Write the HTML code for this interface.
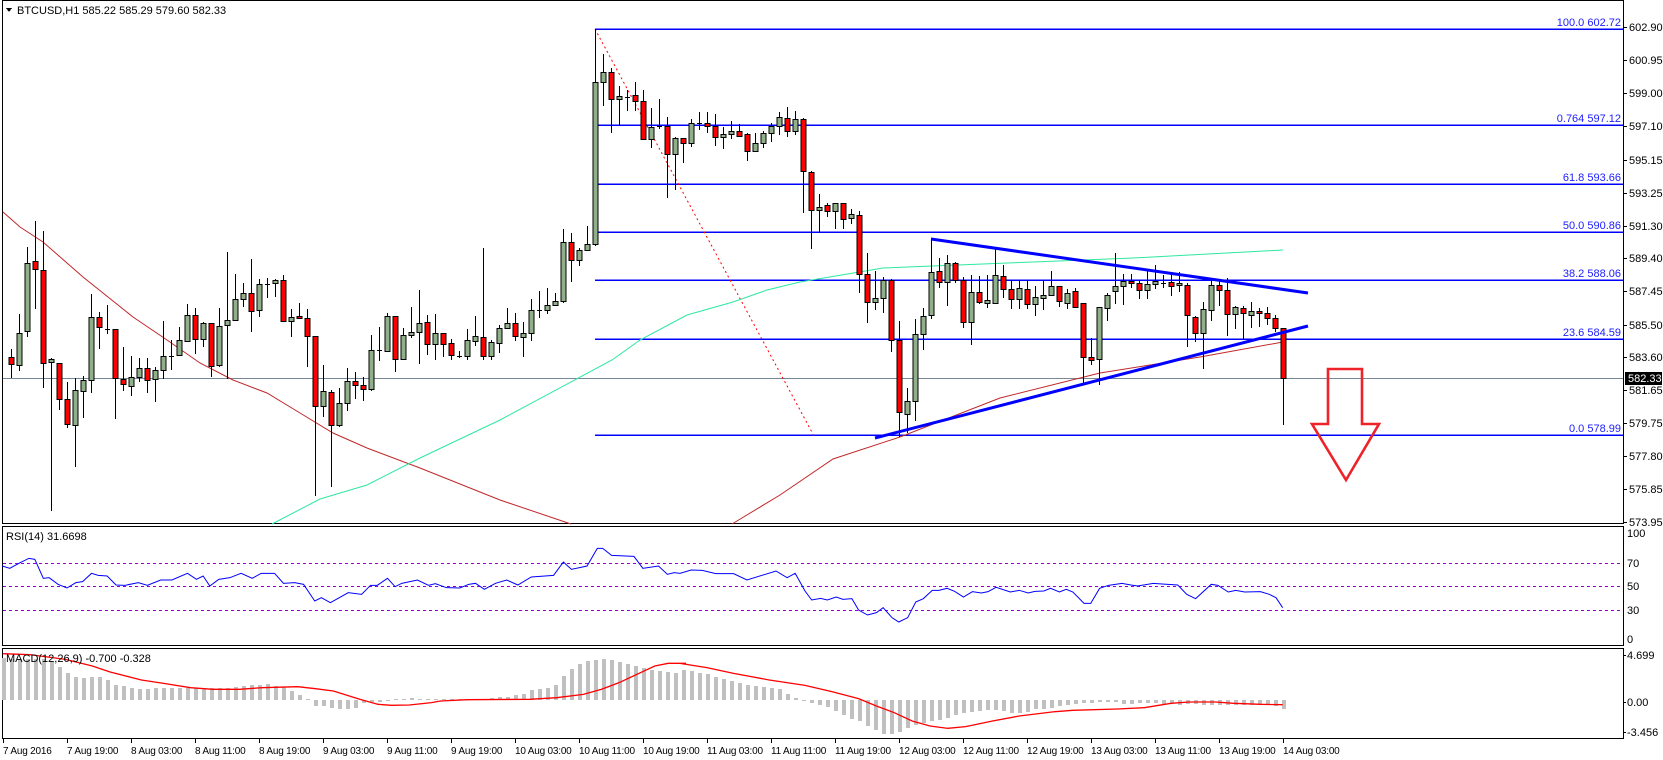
<!DOCTYPE html>
<html><head><meta charset="utf-8">
<style>
html,body{margin:0;padding:0;background:#fff;}
svg{display:block;}
text{font-family:"Liberation Sans",sans-serif;font-size:11px;fill:#000;}
#times text{font-size:10px;letter-spacing:-0.2px;}
</style></head>
<body>
<svg id="s" width="1663" height="760" viewBox="0 0 1663 760" xmlns="http://www.w3.org/2000/svg" shape-rendering="crispEdges">
<rect x="0" y="0" width="1663" height="760" fill="#fff"/>
<rect x="2.5" y="0.5" width="1621" height="523" fill="none" stroke="#000"/>
<rect x="2.5" y="526.5" width="1621" height="119" fill="none" stroke="#000"/>
<rect x="2.5" y="648.5" width="1621" height="90" fill="none" stroke="#000"/>
<g id="grid"></g>
<g stroke="#0000ff" stroke-width="1.5">
<line x1="595" y1="29" x2="1623" y2="29"/>
<line x1="595" y1="125" x2="1623" y2="125"/>
<line x1="595" y1="184" x2="1623" y2="184"/>
<line x1="595" y1="232" x2="1623" y2="232"/>
<line x1="595" y1="280" x2="1623" y2="280"/>
<line x1="595" y1="339" x2="1623" y2="339"/>
<line x1="595" y1="435" x2="1623" y2="435"/>
</g>
<g text-anchor="end" style="font-size:10.5px">
<text x="1621" y="26" style="fill:#2020ff">100.0  602.72</text>
<text x="1621" y="122" style="fill:#2020ff">0.764  597.12</text>
<text x="1621" y="181" style="fill:#2020ff">61.8  593.66</text>
<text x="1621" y="229" style="fill:#2020ff">50.0 590.86</text>
<text x="1621" y="277" style="fill:#2020ff">38.2  588.06</text>
<text x="1621" y="336" style="fill:#2020ff">23.6  584.59</text>
<text x="1621" y="432" style="fill:#2020ff">0.0  578.99</text>
</g>
<line x1="3" y1="378.5" x2="1623" y2="378.5" stroke="#778899"/>
<line x1="595" y1="29" x2="814" y2="436" stroke="#ff0000" stroke-dasharray="2,3" shape-rendering="auto"/>
<g id="ma" shape-rendering="auto"></g>
<g id="candles"></g>
<g stroke="#0000ff" stroke-width="3" shape-rendering="auto">
<line x1="931" y1="239" x2="1308" y2="293"/>
<line x1="875" y1="438" x2="1308" y2="326"/>
</g>
<path d="M1328 369 L1362 369 L1362 424 L1379 424 L1346 480 L1312 424 L1328 424 Z" fill="none" stroke="#ee2229" stroke-width="2.6" shape-rendering="auto"/>
<g id="rsi" shape-rendering="auto"></g>
<g id="macd"></g>
<path d="M6 8 L12 8 L9 12 Z" fill="#000"/>
<text x="17" y="14">BTCUSD,H1  585.22 585.29 579.60 582.33</text>
<text x="6" y="540">RSI(14) 31.6698</text>
<text x="6" y="662">MACD(12,26,9) -0.700 -0.328</text>
<g id="axis"></g>
<rect x="1625" y="372" width="37" height="13" fill="#000"/>
<text x="1628" y="382" style="fill:#fff">582.33</text>
<g id="times"></g>
</svg>
<script>
var NS="http://www.w3.org/2000/svg";
function el(p,t,a,txt){var e=document.createElementNS(NS,t);for(var k in a)e.setAttribute(k,a[k]);if(txt!=null)e.textContent=txt;document.getElementById(p).appendChild(e);return e;}
var pl=["602.90","600.95","599.00","597.10","595.15","593.25","591.30","589.40","587.45","585.50","583.60","581.65","579.75","577.80","575.85","573.95"];
var py=[27,60,93,126,160,193,226,258,291,325,357,390,423,456,489,522];
for(var i=0;i<pl.length;i++){el("axis","line",{x1:1623,y1:py[i]+.5,x2:1627,y2:py[i]+.5,stroke:"#000"});el("axis","text",{x:1629,y:py[i]+4},pl[i]);}
var rl=[["100",533],["70",563],["50",586],["30",610],["0",639]];
rl.forEach(function(r){el("axis","text",{x:1627,y:r[1]+4},r[0]);});
[["4.699",655],["0.00",702],["-3.456",732]].forEach(function(r){el("axis","text",{x:1627,y:r[1]+4},r[0]);el("axis","line",{x1:1623,y1:r[1]+.5,x2:1626,y2:r[1]+.5,stroke:"#000"});});
[563,586,610].forEach(function(y){el("grid","line",{x1:3,y1:y+.5,x2:1623,y2:y+.5,stroke:"#9400d3","stroke-dasharray":"3,3"});});
var tl=["7 Aug 2016","7 Aug 19:00","8 Aug 03:00","8 Aug 11:00","8 Aug 19:00","9 Aug 03:00","9 Aug 11:00","9 Aug 19:00","10 Aug 03:00","10 Aug 11:00","10 Aug 19:00","11 Aug 03:00","11 Aug 11:00","11 Aug 19:00","12 Aug 03:00","12 Aug 11:00","12 Aug 19:00","13 Aug 03:00","13 Aug 11:00","13 Aug 19:00","14 Aug 03:00"];
for(var i=0;i<tl.length;i++){var x=3+64*i;el("times","line",{x1:x+.5,y1:739,x2:x+.5,y2:743,stroke:"#000"});el("times","text",{x:x,y:754},tl[i]);}
var A=[[508,390,610,526],[530,508,595,552],[556,402,572,458],[452,202,470,250],[244,123,386,268],[270,153,623,548],[547,535,992,538],[548,548,690,658],[658,605,743,733],[736,595,860,631],[632,588,713,601],[601,342,640,412],[412,395,506,442],[448,375,463,449],[448,448,718,595],[598,500,633,613],[617,528,647,592],[592,535,607,565],[565,535,638,600],[598,560,665,571],[571,423,596,529],[527,480,569,528],[526,441,527,481],[482,372,486,406],[406,383,523,478],[478,425,502,430],[430,430,592,558],[556,383,560,438],[436,215,598,421],[421,282,421,358],[358,308,380,340],[340,237,457,393],[391,297,412,313],[312,293,355,312],[310,296,352,301],[301,285,424,424],[424,387,472,410],[408,369,414,414],[415,386,560,469],[469,469,948,679],[679,555,712,634],[637,630,922,736],[736,624,742,670],[670,564,692,604],[604,576,658,616],[616,591,664,628],[628,464,634,511],[510,440,542,510],[512,399,516,409],[409,409,575,538],[538,444,540,466],[466,380,473,455],[455,330,553,428]];
var B=[[907,885,1005,973],[973,882,1020,940],[940,940,1010,973],[970,957,1020,1005],[1007,993,1015,1007],[1008,927,1020,961],[964,888,977,949],[952,684,1020,1008],[1008,960,1020,967],[970,915,998,925],[925,864,928,910],[910,880,962,949],[952,906,1012,940],[940,838,962,871],[871,813,893,871],[871,803,883,856],[856,820,858,844],[842,627,848,667],[667,639,785,721],[721,683,737,691],[691,617,692,673],[673,28,677,187],[187,101,258,157],[155,145,338,238],[238,198,315,229],[232,210,272,232],[226,186,272,244],[244,210,358,358],[358,264,385,322],[322,237,326,318],[317,291,533,403],[403,351,509,355],[355,355,428,370],[370,297,382,310],[310,276,330,310],[310,276,340,319],[319,282,377,352],[352,321,388,343],[343,303,358,334],[334,313,350,347],[343,340,424,394],[394,340,394,370],[370,334,385,340],[340,309,367,318],[318,276,346,292],[295,261,352,334],[334,273,346,298],[298,295,580,454],[457,454,688,571],[571,522,640,561]];
var C=[[136,128,170,154],[154,128,206,130],[130,128,208,176],[175,146,192,163],[166,153,398,343],[343,279,488,427],[427,333,450,415],[415,352,460,361],[361,358,575,540],[540,483,830,757],[763,684,820,724],[724,477,782,522],[522,444,569,469],[466,235,476,337],[334,295,385,367],[367,286,437,310],[310,307,369,361],[361,352,503,485],[485,346,554,397],[397,348,431,425],[428,346,443,421],[428,262,430,346],[349,315,413,388],[388,361,448,418],[418,361,446,385],[388,361,446,433],[433,379,467,412],[415,361,449,406],[406,334,397,379],[379,379,440,424],[430,388,446,400],[394,385,443,440],[430,428,676,592],[592,535,616,601],[598,440,676,442],[445,400,483,406],[394,280,431,379],[379,343,434,364],[364,343,385,370],[370,361,416,391],[391,331,416,373],[373,316,388,364],[370,346,385,370],[367,343,407,379],[376,337,397,370],[376,370,560,466],[472,467,545,520],[520,426,627,448],[451,358,482,376],[376,361,437,391],[391,355,527,463],[463,437,506,442],[445,437,536,460],[466,427,503,454],[454,443,500,460],[460,440,496,475],[475,466,516,505],[505,503,794,655]];
var D=[];
A.forEach(function(c){D.push(c.map(function(v){return 180+v/3;}));});
B.forEach(function(c){D.push(c.map(function(v){return 20+v/3;}));});
C.forEach(function(c){D.push(c.map(function(v){return 160+v/3;}));});
for(var i=0;i<D.length;i++){
 var x=3+8*i,o=D[i][0],h=D[i][1],l=D[i][2],c=D[i][3];
 if(x<4)continue;
 el("candles","line",{x1:x+.5,y1:Math.round(h),x2:x+.5,y2:Math.round(l),stroke:"#000"});
 var t=Math.round(Math.min(o,c)),b=Math.round(Math.max(o,c));
 if(b-t<2){el("candles","line",{x1:x-2,y1:t+.5,x2:x+3,y2:t+.5,stroke:"#000"});}
 else el("candles","rect",{x:x-2,y:t+.5,width:5,height:b-t,fill:(c<o?"#8fb088":"#ff0000"),stroke:"#000"});
}
function poly(p,pts,col,w){el(p,"polyline",{points:pts.map(function(q){return q.join(",");}).join(" "),fill:"none",stroke:col,"stroke-width":w||1});}
poly("ma",[[3,212],[20,227],[43,242],[83,277],[133,317],[167,340],[200,363],[233,380],[267,393],[300,413],[333,433],[367,448],[420,468],[500,500],[571,524]],"#c0282b");
poly("ma",[[732,524],[780,495],[833,459],[900,437],[1000,398],[1100,373],[1200,357],[1283,342]],"#c0282b");
poly("ma",[[272,524],[320,499],[367,485],[420,458],[500,420],[612,360],[640,340],[687,315],[733,302],[767,290],[800,282],[883,268],[1033,262],[1133,258],[1283,250]],"#2ee8a0");
var r1=[[5,120],[22,127],[45,110],[65,97],[78,100],[97,157],[110,155],[130,175],[150,186],[170,170],[185,167],[205,142],[220,148],[240,150],[260,177],[280,178],[310,170],[330,178],[360,162],[385,162],[420,142],[440,160],[455,150],[470,180],[490,160],[515,155],[540,142],[565,157],[585,142],[615,142],[635,172],[660,170],[680,175],[705,225],[720,215],[740,230],[780,200],[810,205],[830,178],[845,178],[868,157],[885,182],[900,172],[935,162],[960,178],[975,173],[1000,185],[1030,186],[1050,175],[1065,172],[1085,190],[1110,172],[1135,162],[1160,177],[1190,153],[1240,148],[1262,108],[1280,130],[1315,120],[1338,67],[1350,67],[1370,88],[1420,91],[1440,127],[1475,120],[1495,145],[1510,140],[1530,143],[1550,132],[1568,132]];
var r2=[[0,142],[25,132],[50,133],[80,143],[120,143],[150,162],[215,135],[240,155],[258,142],[280,195],[295,222],[315,217],[330,222],[350,213],[365,220],[385,218],[400,252],[420,267],[440,260],[455,245],[475,275],[490,288],[510,275],[528,228],[545,218],[565,193],[580,193],[598,187],[615,196],[635,213],[655,197],[675,201],[690,197],[708,184],[740,198],[760,193],[780,201],[795,196],[815,195],[830,187],[850,198],[865,190],[880,198],[905,232],[920,232],[940,187],[960,178],[990,172],[1010,177],[1025,180],[1060,172],[1080,174],[1115,177],[1135,205],[1155,218],[1190,175],[1205,178],[1228,198],[1245,193],[1265,198],[1300,197],[1320,205],[1335,215],[1350,245]];
var rp=[];r1.forEach(function(q){if(q[0]/2.24<682)rp.push([q[0]/2.24,526+q[1]/3]);});r2.forEach(function(q){rp.push([680+q[0]/2.24,526+q[1]/3]);});
poly("rsi",rp,"#0000ff");
var m1=[395,398,398,398,398,398,405,422,440,452,455,453,453,462,476,480,485,488,489,486,486,486,486,486,486,486,486,486,486,482,480,478,476,474,480,484,494,508,518,540,540,545,548,548,545,530,528,527,525,520,518,516,518,520,520,520,520,520,520,520,520,515,512,512,508,505,492,490,485,478,450,430,415,405,402,400,403,408,415,420,427,432,435,437,440];
var m2=[432,435,440,445,452,458,465,472,478,480,483,485,490,505,516,522,530,536,542,555,568,578,584,600,613,625,625,617,605,598,590,585,583,575,568,562,558,555,552,552,555,560,560,557,550,550,545,540,538,535,532,530,528,528,528,535,535,532,532,532,535,532,536,535,535,537,537,537,537,537,537,537,537,537,540,548];
var mv=m1.concat(m2);
for(var i=0;i<mv.length&&i<161;i++){var x=3+8*i,y=526+mv[i]/3,z=700;var t=Math.round(Math.min(y,z)),b=Math.round(Math.max(y,z));if(b-t<1)b=t+1;el("macd","rect",{x:x-1,y:t,width:4,height:b-t,fill:"#c0c0c0"});}
var s1=[[0,383],[60,386],[140,400],[200,420],[240,438],[310,462],[360,472],[420,485],[470,490],[530,490],[580,485],[660,482],[700,488],[740,495],[800,520],[840,535],[870,538],[910,537],[960,530],[980,525],[1040,521],[1180,520],[1240,515],[1300,505],[1340,490],[1380,470],[1420,445],[1460,420],[1490,412],[1530,412]];
var s2=[[0,412],[60,425],[120,442],[200,462],[280,478],[340,497],[400,518],[440,540],[480,560],[520,585],[560,600],[600,607],[640,602],[700,585],[760,570],[840,557],[880,553],[980,549],[1040,545],[1100,532],[1140,528],[1200,528],[1240,532],[1300,535],[1350,536]];
var sp=[];s1.forEach(function(q){sp.push([3+q[0]/2.24,526+q[1]/3]);});s2.forEach(function(q){sp.push([680+q[0]/2.24,526+q[1]/3]);});
el("macd","polyline",{points:sp.map(function(q){return q.join(",");}).join(" "),fill:"none",stroke:"#ff0000","stroke-width":1.3,"shape-rendering":"auto"});
</script>
</body></html>
